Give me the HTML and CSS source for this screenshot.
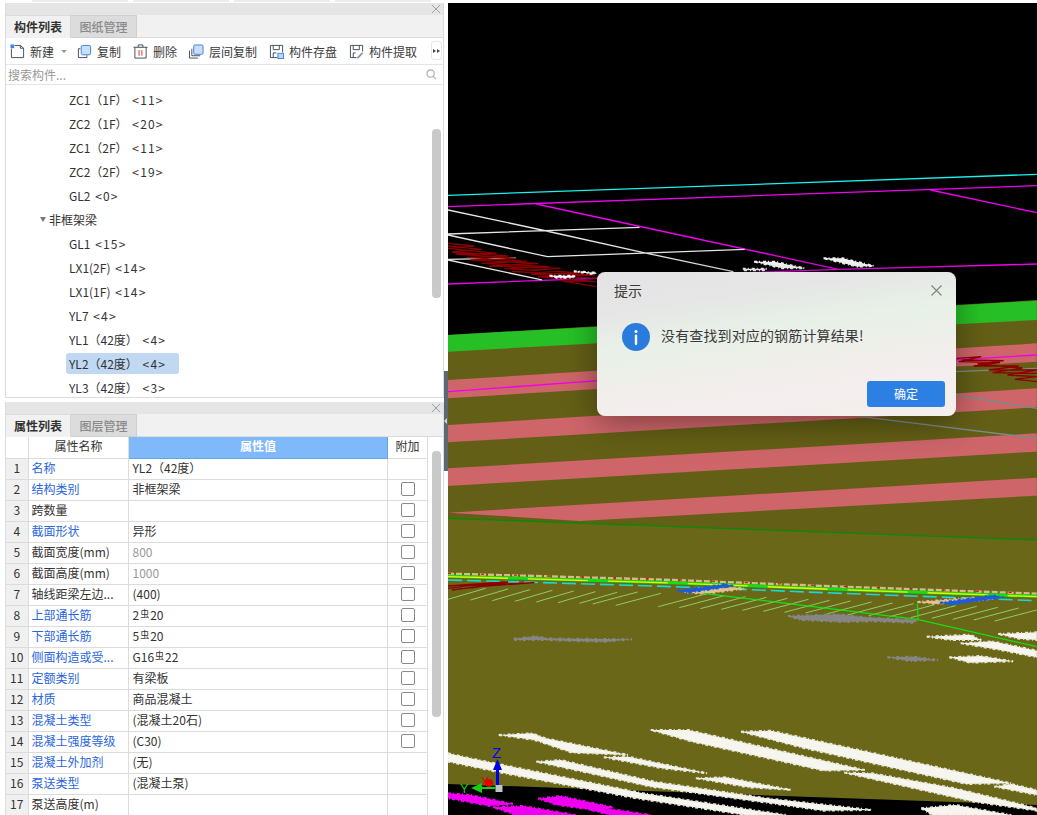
FILE: index.html
```html
<!DOCTYPE html>
<html lang="zh">
<head>
<meta charset="utf-8">
<title>构件列表</title>
<link rel="stylesheet" href="styles.css">
</head>
<body>
<div class="app">
  <div class="topstrip"><i></i><i></i><i></i><i></i></div>
  <div class="main">
    <aside class="side">
      <section class="panel panel-list">
        <div class="panel-head"><svg class="x" viewBox="0 0 8 8"><path d="M0 0L8 8M8 0L0 8"/></svg></div>
        <div class="tabs"><span class="tab on">构件列表</span><span class="tab">图纸管理</span></div>
        <div class="toolbar">
          <span class="tool">
            <svg class="ic" viewBox="0 0 16 16"><path class="ln" d="M1.500 5V14.500H14.500V4.500L11 1.500H5"/><path class="ln" d="M11 1.500V4.500H14.500"/><rect x="0.500" y="0.500" width="4" height="4" fill="#3f86e0"/></svg>
            <span>新建</span><b class="caret"></b>
          </span>
          <span class="tool">
            <svg class="ic" viewBox="0 0 16 16"><path class="ln" d="M3.500 5H1.500V14.500H10.500V12"/><rect class="fl" x="4.500" y="1.500" width="10" height="10" rx="1.500"/></svg>
            <span>复制</span>
          </span>
          <span class="tool">
            <svg class="ic" viewBox="0 0 16 16"><path class="ln" d="M0.500 3.500H15.500M5.500 3.500V1H10.500V3.500M2 3.500V15H14V3.500"/><path d="M6.500 6.500V12.500M9.500 6.500V12.500" stroke="#d9342b" fill="none"/></svg>
            <span>删除</span>
          </span>
          <span class="tool">
            <svg class="ic" viewBox="0 0 16 16"><path class="ln" d="M0.500 7V15H9.500M3 5V12.500H12"/><rect class="fl" x="5" y="1" width="10" height="10" rx="1.500"/></svg>
            <span>层间复制</span>
          </span>
          <span class="tool">
            <svg class="ic" viewBox="0 0 16 16"><path class="ln" d="M9 14.500H1.500V1.500H14.500V9M4.500 1.500V6H11V1.500M4.500 14.500V9.500H8"/><rect x="9.500" y="10" width="6" height="5.500" fill="#bcd6f7" stroke="#3f86e0"/></svg>
            <span>构件存盘</span>
          </span>
          <span class="tool">
            <svg class="ic" viewBox="0 0 16 16"><path class="ln" d="M8 14.500H1.500V1.500H14.500V8M4.500 1.500V6H11V1.500M4.500 14.500V9.500H7"/><path d="M9 15L14.500 9.500" stroke="#8a97a8" stroke-width="2" fill="none"/></svg>
            <span>构件提取</span>
          </span>
          <span class="more"><b></b><b></b></span>
        </div>
        <div class="search"><span>搜索构件...</span>
          <svg class="mag" viewBox="0 0 12 12"><circle cx="5" cy="5" r="4"/><path d="M8 8L11 11"/></svg>
        </div>
        <div class="tree">
          <div class="node"><span>ZC1（1F） <em>&lt;11&gt;</em></span></div>
          <div class="node"><span>ZC2（1F） <em>&lt;20&gt;</em></span></div>
          <div class="node"><span>ZC1（2F） <em>&lt;11&gt;</em></span></div>
          <div class="node"><span>ZC2（2F） <em>&lt;19&gt;</em></span></div>
          <div class="node"><span>GL2 <em>&lt;0&gt;</em></span></div>
          <div class="node group"><b class="tri"></b><span>非框架梁</span></div>
          <div class="node"><span>GL1 <em>&lt;15&gt;</em></span></div>
          <div class="node"><span>LX1(2F) <em>&lt;14&gt;</em></span></div>
          <div class="node"><span>LX1(1F) <em>&lt;14&gt;</em></span></div>
          <div class="node"><span>YL7 <em>&lt;4&gt;</em></span></div>
          <div class="node"><span>YL1（42度） <em>&lt;4&gt;</em></span></div>
          <div class="node sel"><span>YL2（42度） <em>&lt;4&gt;</em></span></div>
          <div class="node"><span>YL3（42度） <em>&lt;3&gt;</em></span></div>
          <div class="sb sb-tree"></div>
        </div>
      </section>
      <section class="panel panel-prop">
        <div class="panel-head"><svg class="x" viewBox="0 0 8 8"><path d="M0 0L8 8M8 0L0 8"/></svg></div>
        <div class="tabs"><span class="tab on">属性列表</span><span class="tab">图层管理</span></div>
        <div class="tablewrap">
          <table class="props">
            <colgroup><col class="c1"><col class="c2"><col class="c3"><col class="c4"></colgroup>
            <thead><tr><th></th><th>属性名称</th><th class="hl">属性值</th><th>附加</th></tr></thead>
            <tbody>
              <tr><td class="n">1</td><td class="k">名称</td><td>YL2（42度）</td><td></td></tr>
              <tr><td class="n">2</td><td class="k">结构类别</td><td>非框架梁</td><td><i class="cb"></i></td></tr>
              <tr><td class="n">3</td><td>跨数量</td><td></td><td><i class="cb"></i></td></tr>
              <tr><td class="n">4</td><td class="k">截面形状</td><td>异形</td><td><i class="cb"></i></td></tr>
              <tr><td class="n">5</td><td>截面宽度(mm)</td><td class="dim">800</td><td><i class="cb"></i></td></tr>
              <tr><td class="n">6</td><td>截面高度(mm)</td><td class="dim">1000</td><td><i class="cb"></i></td></tr>
              <tr><td class="n">7</td><td>轴线距梁左边...</td><td>(400)</td><td><i class="cb"></i></td></tr>
              <tr><td class="n">8</td><td class="k">上部通长筋</td><td>2<sup>虫</sup>20</td><td><i class="cb"></i></td></tr>
              <tr><td class="n">9</td><td class="k">下部通长筋</td><td>5<sup>虫</sup>20</td><td><i class="cb"></i></td></tr>
              <tr><td class="n">10</td><td class="k">侧面构造或受...</td><td>G16<sup>虫</sup>22</td><td><i class="cb"></i></td></tr>
              <tr><td class="n">11</td><td class="k">定额类别</td><td>有梁板</td><td><i class="cb"></i></td></tr>
              <tr><td class="n">12</td><td class="k">材质</td><td>商品混凝土</td><td><i class="cb"></i></td></tr>
              <tr><td class="n">13</td><td class="k">混凝土类型</td><td>(混凝土20石)</td><td><i class="cb"></i></td></tr>
              <tr><td class="n">14</td><td class="k">混凝土强度等级</td><td>(C30)</td><td><i class="cb"></i></td></tr>
              <tr><td class="n">15</td><td class="k">混凝土外加剂</td><td>(无)</td><td></td></tr>
              <tr><td class="n">16</td><td class="k">泵送类型</td><td>(混凝土泵)</td><td></td></tr>
              <tr><td class="n">17</td><td>泵送高度(m)</td><td></td><td></td></tr>
            </tbody>
          </table>
          <div class="sb sb-prop"></div>
        </div>
      </section>
    </aside>
    <div class="splitter"><span class="grip"><b></b></span></div>
    <div class="view">
      <svg class="scene" viewBox="448 3 589 812" preserveAspectRatio="none">
        <rect x="448" y="3" width="589" height="812" fill="#000"/>
        <g transform="translate(448 160) scale(.3755 .3333)">
          <path class="s" stroke="#19f0f0" d="M0 106L1568 43"/>
          <path class="s" stroke="#f000f0" d="M0 140L1568 77M235 132L1040 328M1285 90L1568 158M1040 328L1568 312M0 372L400 355L1040 328"/>
          <path class="s" stroke="#e6e6e6" d="M0 150L250 210L530 280L760 335M0 222L510 202M0 225L265 290M265 290L790 268M0 300L250 360M0 298L180 294"/>
          <path class="s" stroke="#8c0000" d="M0 250L70 258L0 265L130 280L20 282L180 295L60 300L240 310L110 318L300 325L170 335L390 345L240 350L395 365L300 362L395 380M0 258L90 268L10 276L160 288L50 292L210 304L90 310L270 320L150 326L350 338L220 342L395 355"/>
          <path class="rough" fill="#fff" stroke="#fff" d="M815 305L870 305L950 325L890 325ZM1000 295L1050 295L1135 318L1090 320ZM785 326L850 326L840 331L790 331ZM270 347L340 347L330 353L290 353ZM335 334L395 338L390 343Z"/>
        </g>
        <path fill="#635f16" d="M448 335L1037 300V815H448Z"/>
        <g transform="translate(448 320) scale(.3755 .3333)">
          <path fill="#26c026" d="M0 45L400 20L1568 -58V0L400 70L0 95Z"/>
          <path fill="#cd6569" d="M0 180L1568 70V125L0 235Z"/>
          <path fill="#cd6569" d="M0 315L1568 205V262L0 367Z"/>
          <path fill="#cd6569" d="M0 445L1568 340V395L0 498Z"/>
          <path fill="#6b6718" d="M0 595L1568 660V1500H0Z"/>
          <path fill="#cd6569" d="M0 578L1568 473V527L350 603Z"/>
          <path class="s" stroke="#0a8a0a" d="M0 595L1568 660"/>
          <path class="s" stroke="#f000f0" d="M0 215L400 182L1568 105"/>
          <path class="s" stroke="#7d8a8a" d="M1100 290L1568 355M1350 155L1568 145M1350 225L1568 265"/>
          <path class="s" stroke="#8c0000" d="M1355 115L1420 110L1360 125L1470 128L1400 138L1520 138L1440 150L1568 150L1490 165L1568 170L1510 178L1568 185M1370 120L1480 122L1410 132L1530 144L1450 158L1568 160"/>
        </g>
        <g transform="translate(448 560) scale(.3755 .3333)">
          <path fill="#000" d="M0 672L1568 735V765H0Z"/>
          <path class="s3" stroke="#d8b890" stroke-dasharray="6 2" d="M0 41L200 47L600 60L1000 78L1568 101"/>
          <path class="s" stroke="#e01010" stroke-dasharray="3 30" d="M0 40L200 46L600 59L1000 77L1568 100"/>
          <path class="s4" stroke="#12e012" d="M0 49L200 55L600 68L1000 86L1568 109"/>
          <path class="s" stroke="#f0f000" stroke-dasharray="60 20" d="M0 50L200 56L600 69L1000 87L1568 110"/>
          <path class="s2" stroke="#18d8d8" stroke-dasharray="14 5" d="M0 60L200 66L600 80L1000 98L1568 122"/>
          <path class="s" stroke="#8c0000" d="M0 85L120 68L30 78L230 68L80 80L10 90M0 78L160 66L60 84"/>
          <path class="rough" fill="#e8c090" stroke="#e8c090" d="M630 96L760 82L790 86L680 102ZM1250 126L1400 113L1440 118L1300 132Z"/>
          <path class="rough" fill="#1c5cdc" stroke="#1c5cdc" d="M610 92L740 72L760 78L640 98ZM1310 128L1450 106L1480 112L1340 134Z"/>
          <path class="thin" stroke="#8ccc6c" d="M0 118l100-33M60 120l100-33M118 122l100-33M178 124l100-33M235 126l100-33M293 128l100-33M350 130l100-33M385 132l120-36M447 136l120-36M560 140l120-36M616 143l120-36M672 146l120-36M728 148l120-36M784 151l120-36M840 154l120-36M896 157l120-36M952 159l120-36M1008 162l120-36M1064 165l120-36M1120 167l120-36M1176 170l120-36M1232 173l120-36M1288 175l120-36M1344 178l120-36M1400 180l120-36M1456 183l112-33"/>
          <path class="s" stroke="#12e012" d="M680 100L1250 178L1568 260M1250 130L1252 178"/>
          <path class="rough" fill="#868686" stroke="#868686" d="M175 236L235 229L265 235L320 236L490 238L420 245L330 243L260 240L180 240ZM1170 292L1240 290L1305 300L1230 303ZM905 168L1040 163L1110 172L1250 180L1240 188L1130 184L1050 186L940 180Z"/>
          <path class="rough" fill="#f6f6ee" stroke="#e8e8dc" d="M135 525L225 520L260 535L480 585L330 578L230 540ZM415 592L480 590L690 640L570 625ZM660 655L740 652L915 690L800 682ZM0 580L60 595L170 620L520 700L900 765L790 765L500 715L150 640L0 605ZM235 605L300 600L550 665L850 715L1130 750L1000 752L540 680ZM540 510L640 510L1110 630L1000 632L650 545ZM780 515L860 512L1500 670L1380 672L950 565ZM1055 638L1130 640L1350 685L1480 720L1568 745V752L1400 725ZM1455 680L1500 672L1568 690V705ZM1260 745L1350 735L1500 765H1290ZM1275 230L1390 224L1420 240L1340 240ZM1365 250L1450 244L1568 272V292L1470 270ZM1465 222L1568 217V240L1520 236ZM1335 292L1420 288L1505 304L1390 308Z"/>
          <path class="rough" fill="#f000f0" stroke="#f000f0" d="M0 700L60 705L175 732L110 738L0 715ZM240 716L300 708L440 742L400 752L290 735ZM120 742L200 738L340 765H180ZM380 750L440 748L540 765H430Z"/>
        </g>
        <rect x="495.500" y="785" width="7" height="7" fill="#c4c4c4"/>
        <path fill="#0000e6" d="M496 785V770H493L497.500 759L502 770H499V785Z"/>
        <path fill="#12d012" d="M496 787H482V783L471 788L482 793V789H496Z"/>
        <circle cx="489" cy="783" r="4" fill="#e60000"/>
        <text class="axis" x="492" y="758" fill="#0000e6">Z</text>
        <text class="axis small" x="460" y="793" fill="#12d012">Y</text>
        <text class="axis small" x="481" y="786" fill="#e60000">X</text>
      </svg>
      <div class="dialog">
        <div class="dlg-head"><span>提示</span>
          <svg class="dlg-x" viewBox="0 0 11 11"><path d="M0.500 0.500L10.500 10.500M10.500 0.500L0.500 10.500"/></svg>
        </div>
        <div class="dlg-body">
          <svg class="info" viewBox="0 0 28 28"><circle cx="14" cy="14" r="14" fill="#2a7cdc"/><circle cx="14" cy="8.500" r="1.500" fill="#fff"/><rect x="12.800" y="11.500" width="2.400" height="10.500" rx="1.200" fill="#fff"/></svg>
          <span class="msg">没有查找到对应的钢筋计算结果!</span>
        </div>
        <div class="dlg-foot"><span class="btn">确定</span></div>
      </div>
    </div>
  </div>
</div>
</body>
</html>
```

FILE: styles.css
```css
* { box-sizing: border-box; }
html, body { margin: 0; padding: 0; height: 100%; background: #fff; overflow: hidden; }
body { font-family: "Noto Sans CJK SC", "Noto Sans", sans-serif; font-size: 12px; color: #333; }
.app { width: 1037px; height: 815px; display: flex; flex-direction: column; overflow: hidden; }
.topstrip { height: 3px; flex: none; display: flex; gap: 5px; padding-left: 32px; background: #fff; }
.topstrip i { width: 96px; height: 2px; background: #ececec; }
.main { flex: 1; display: flex; min-height: 0; }
.side { width: 444px; flex: none; padding-left: 5px; display: flex; flex-direction: column; gap: 4px; background: #fff; }
.panel { border: solid #dcdcdc; border-width: 0 1px; display: flex; flex-direction: column; background: #fff; }
.panel-list { height: 395px; border-bottom-width: 1px; }
.panel-prop { flex: 1; min-height: 0; overflow: hidden; }
.panel-head { height: 12px; flex: none; background: #e5e5e5; display: flex; justify-content: flex-end; align-items: center; padding-right: 3px; }
.x { width: 8px; height: 8px; }
.x path { stroke: #a0a0a0; fill: none; }
.tabs { height: 23px; flex: none; display: flex; background: #f1f1f1; border-bottom: 1px solid #dcdcdc; }
.tab { width: 66px; height: 23px; line-height: 22px; text-align: center; background: #dcdcdc; color: #8a8a8a; font-weight: 500; border: 1px solid #cfcfcf; border-left: 0; }
.tab.on { width: 65px; background: #f1f1f1; color: #333; font-weight: 700; border-color: #d5d5d5; border-bottom-color: #f1f1f1; border-top: 1px solid #dcdcdc; }
.toolbar { height: 27px; flex: none; display: flex; align-items: center; gap: 12px; padding-left: 4px; position: relative; border-bottom: 1px solid #e4e4e4; color: #3a3a3a; }
.tool { display: flex; align-items: center; gap: 5px; white-space: nowrap; }
.ic { width: 15px; height: 15px; flex: none; }
.ln { fill: none; stroke: #3f4a57; stroke-width: 1; }
.fl { fill: #c9defa; stroke: #3b7fd6; stroke-width: 1; }
.caret { width: 0; height: 0; border: 3px solid transparent; border-top: 3px solid #999; border-bottom: 0; margin-left: 2px; margin-right: -2px; }
.more { position: absolute; right: 1px; top: 3px; width: 11px; height: 19px; border: 1px solid #e6e6e6; border-radius: 3px; display: flex; align-items: center; justify-content: center; gap: 1px; }
.more b { width: 0; height: 0; border: 2.500px solid transparent; border-left: 3px solid #444; border-right: 0; }
.search { height: 20px; flex: none; display: flex; align-items: center; justify-content: space-between; padding: 0 6px 0 2px; color: #9a9a9a; border-bottom: 1px solid #e4e4e4; }
.mag { width: 11px; height: 11px; fill: none; stroke: #aaa; stroke-width: 1.200; }
.tree { flex: 1; min-height: 0; overflow: hidden; padding-top: 2px; position: relative; }
.node { height: 24px; display: flex; align-items: center; padding-left: 60px; white-space: nowrap; }
.node span { display: block; height: 21px; line-height: 21px; padding: 0 3px; border-radius: 3px; width: 113px; word-spacing: 2px; }
.node em { font-style: normal; letter-spacing: 1.200px; }
.node.group { padding-left: 34px; }
.node.group span { padding-left: 2px; }
.tri { width: 0; height: 0; border: 3px solid transparent; border-top: 5px solid #777; border-bottom: 0; margin-right: 1px; }
.node.sel span { background: #c0d8f1; }
.sb { position: absolute; width: 9px; background: #c9c9c9; border-radius: 4px; }
.sb-tree { left: 426px; top: 44px; height: 169px; }
.tablewrap { flex: 1; min-height: 0; position: relative; overflow: hidden; }
.props { border-collapse: collapse; table-layout: fixed; width: 421px; }
.c1 { width: 22px; }
.c2 { width: 100px; }
.c3 { width: 259px; }
.c4 { width: 40px; }
.props th, .props td { height: 21px; padding: 0 2px 2px 3px; border: 1px solid #dcdcdc; border-top: 0; font-weight: 400; white-space: nowrap; overflow: hidden; line-height: 18px; }
.props th { text-align: center; }
.props td:nth-child(3) { padding-left: 4px; }
.props td:nth-child(4) { padding: 0 2px 1px 3px; }
.props th.hl { background: #7fb9f9; border-color: #62a4ec; color: #fff; font-weight: 700; }
.props td.n { background: #f0f0f0; text-align: center; font-size: 12px; padding: 0 0 2px; }
.props td.k { color: #2a66dc; }
.props td.dim { color: #999; }
.props td:first-child, .props th:first-child { border-left: 0; }
.props sup { font-size: 9px; line-height: 0; vertical-align: 3px; margin: 0 1px; }
.cb { display: block; width: 14px; height: 14px; margin: 0 auto; border: 1px solid #8a8a8a; border-radius: 2px; background: #fff; }
.sb-prop { left: 426px; top: 14px; height: 266px; }
.splitter { width: 4px; flex: none; position: relative; background: #fff; }
.grip { position: absolute; left: 0; top: 368px; width: 4px; height: 100px; background: #5c6872; display: flex; align-items: center; }
.grip b { width: 0; height: 0; border: 3px solid transparent; border-right: 3px solid #d0d0d0; border-left: 0; }
.view { flex: 1; position: relative; overflow: hidden; min-width: 0; }
.scene { display: block; width: 589px; height: 812px; }
.thin { fill: none; stroke-width: 1; vector-effect: non-scaling-stroke; }
.s { fill: none; stroke-width: 1.300; vector-effect: non-scaling-stroke; }
.s2 { fill: none; stroke-width: 1.600; vector-effect: non-scaling-stroke; }
.s3 { fill: none; stroke-width: 2.400; vector-effect: non-scaling-stroke; }
.s4 { fill: none; stroke-width: 3; vector-effect: non-scaling-stroke; }
.rough { stroke-width: 2; stroke-dasharray: 3 2 1 3; vector-effect: non-scaling-stroke; }
.axis { font-family: "Liberation Sans", sans-serif; font-size: 15px; }
.axis.small { font-size: 13px; }
.dialog { position: absolute; left: 149px; top: 269px; width: 359px; height: 144px; border-radius: 8px; display: flex; flex-direction: column; background: linear-gradient(172deg, #e3e3e5 0%, #e6e6e6 22%, #e8f1e8 42%, #efefea 58%, #f4eeee 75%, #f3efec 100%); box-shadow: 0 6px 32px rgba(0, 0, 0, .38); color: #3a3a3a; }
.dlg-head { height: 38px; flex: none; display: flex; align-items: center; justify-content: space-between; padding: 0 14px 2px 17px; font-size: 14px; }
.dlg-x { width: 11px; height: 11px; }
.dlg-x path { stroke: #808080; fill: none; stroke-width: 1.100; }
.dlg-body { height: 54px; flex: none; display: flex; align-items: center; gap: 11px; padding: 0 0 0 25px; font-size: 14px; }
.msg { padding-bottom: 4px; letter-spacing: .14px; }
.info { width: 28px; height: 28px; flex: none; }
.dlg-foot { flex: 1; display: flex; justify-content: flex-end; align-items: flex-start; padding: 17px 11px 0 0; }
.btn { width: 78px; height: 26px; line-height: 26px; text-align: center; background: #2d80e3; color: #fff; border-radius: 3px; font-size: 12px; }
```
